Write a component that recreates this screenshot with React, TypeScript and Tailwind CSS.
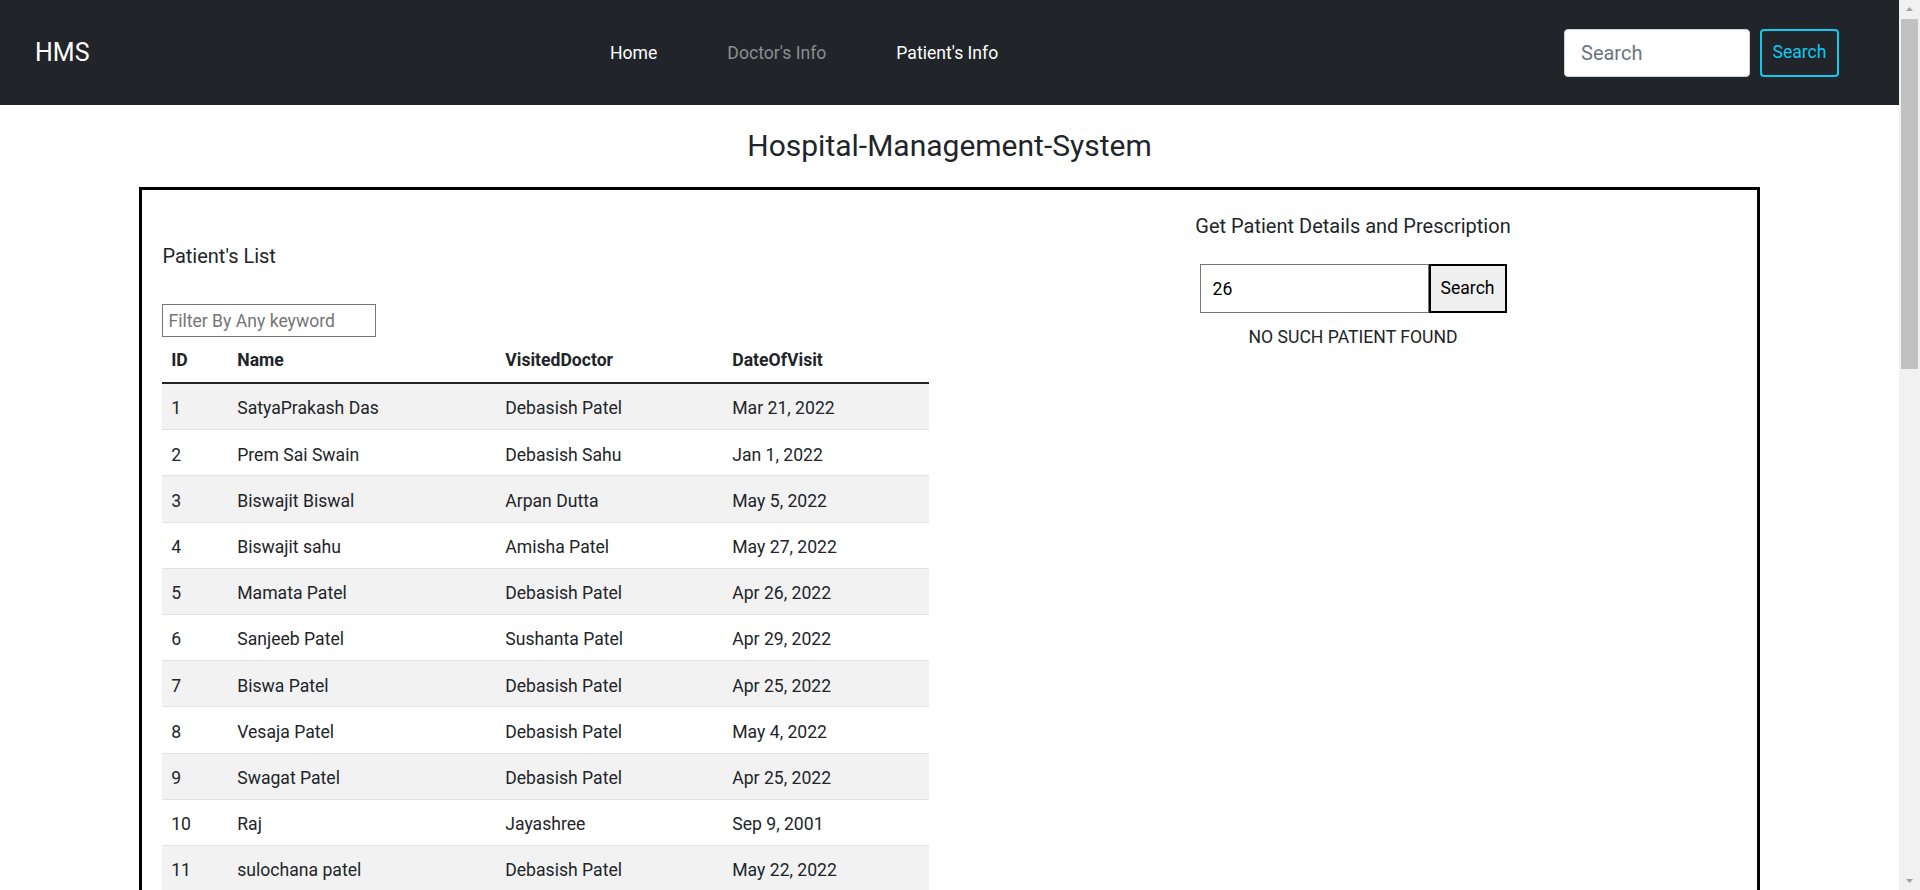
import { useState } from "react";

const patients = [
  { id: 1, name: "SatyaPrakash Das", doctor: "Debasish Patel", date: "Mar 21, 2022" },
  { id: 2, name: "Prem Sai Swain", doctor: "Debasish Sahu", date: "Jan 1, 2022" },
  { id: 3, name: "Biswajit Biswal", doctor: "Arpan Dutta", date: "May 5, 2022" },
  { id: 4, name: "Biswajit sahu", doctor: "Amisha Patel", date: "May 27, 2022" },
  { id: 5, name: "Mamata Patel", doctor: "Debasish Patel", date: "Apr 26, 2022" },
  { id: 6, name: "Sanjeeb Patel", doctor: "Sushanta Patel", date: "Apr 29, 2022" },
  { id: 7, name: "Biswa Patel", doctor: "Debasish Patel", date: "Apr 25, 2022" },
  { id: 8, name: "Vesaja Patel", doctor: "Debasish Patel", date: "May 4, 2022" },
  { id: 9, name: "Swagat Patel", doctor: "Debasish Patel", date: "Apr 25, 2022" },
  { id: 10, name: "Raj", doctor: "Jayashree", date: "Sep 9, 2001" },
  { id: 11, name: "sulochana patel", doctor: "Debasish Patel", date: "May 22, 2022" },
];

function Scrollbar() {
  return (
    <div className="sticky top-0 flex h-[890px] w-[21px] shrink-0 flex-col items-center bg-[#f1f1f1]">
      <svg width="9" height="19" viewBox="0 0 9 19" className="shrink-0">
        <path d="M4.5 7 L8 11 L1 11 Z" fill="#a3a3a3" />
      </svg>
      <div className="h-[350px] w-[17px] bg-[#c1c1c1]" />
      <div className="flex-1" />
      <svg width="9" height="17" viewBox="0 0 9 17" className="shrink-0">
        <path d="M1 6 L8 6 L4.5 10 Z" fill="#a3a3a3" />
      </svg>
    </div>
  );
}

export default function App() {
  const [filter, setFilter] = useState("");
  const [patientId, setPatientId] = useState("26");

  const rows = patients.filter((p) =>
    `${p.id} ${p.name} ${p.doctor} ${p.date}`.toLowerCase().includes(filter.toLowerCase())
  );

  return (
    <div className="flex bg-white font-['Roboto','Liberation_Sans',sans-serif] text-[#212529]">
      <div className="min-w-0 flex-1">
        {/* Navbar */}
        <nav className="flex h-[105px] items-center bg-[#212529] pl-[35px] pr-[60px]">
          <div className="w-[575px] text-[25px] leading-[36px] text-white">HMS</div>
          <ul className="flex gap-[70px] text-[17.6px] leading-[26px]">
            <li className="text-white">Home</li>
            <li className="text-[#8c8e91]">Doctor's Info</li>
            <li className="text-white">Patient's Info</li>
          </ul>
          <form className="ml-auto flex gap-[10px]" onSubmit={(e) => e.preventDefault()}>
            <input
              type="text"
              placeholder="Search"
              className="h-[48px] w-[186px] rounded-[4px] border border-[#ced4da] bg-white px-4 text-[20px] text-[#212529] outline-none placeholder:text-[#6c757d]"
            />
            <button
              type="submit"
              className="h-[48px] w-[79px] rounded-[4px] border-2 border-[#0dcaf0] text-[17.6px] text-[#0dcaf0]"
            >
              Search
            </button>
          </form>
        </nav>

        {/* Title */}
        <h3 className="mt-[23px] text-center text-[30px] leading-[36px]">Hospital-Management-System</h3>

        {/* Main box */}
        <div className="mx-auto mt-[23px] mb-10 box-content flex w-[85%] border-[3px] border-black pb-10">
          {/* Patient list */}
          <div className="w-1/2 px-5 pt-[54px]">
            <h5 className="text-[20px] leading-[24px]">Patient's List</h5>
            <input
              type="text"
              value={filter}
              onChange={(e) => setFilter(e.target.value)}
              placeholder="Filter By Any keyword"
              className="mt-[36px] block h-[33px] w-[214px] border border-[#767676] px-[5px] text-[17.6px] outline-none placeholder:text-[#757575]"
            />
            <table className="mt-[1px] w-full table-fixed border-collapse text-left text-[17.6px] leading-[26.4px]">
              <colgroup>
                <col className="w-[66px]" />
                <col className="w-[268px]" />
                <col className="w-[227px]" />
                <col className="w-[206px]" />
              </colgroup>
              <thead>
                <tr className="border-b-2 border-[#212529]">
                  <th className="px-[8.8px] py-[8.8px] font-bold">ID</th>
                  <th className="px-[8.8px] py-[8.8px] font-bold">Name</th>
                  <th className="px-[8.8px] py-[8.8px] font-bold">VisitedDoctor</th>
                  <th className="px-[8.8px] py-[8.8px] font-bold">DateOfVisit</th>
                </tr>
              </thead>
              <tbody>
                {rows.map((p, i) => (
                  <tr
                    key={p.id}
                    className={`border-b border-[#dee2e6] ${i % 2 === 0 ? "bg-[#f2f2f2]" : "bg-white"}`}
                  >
                    <td className="px-[8.8px] pt-[11.4px] pb-[7.4px]">{p.id}</td>
                    <td className="px-[8.8px] pt-[11.4px] pb-[7.4px]">{p.name}</td>
                    <td className="px-[8.8px] pt-[11.4px] pb-[7.4px]">{p.doctor}</td>
                    <td className="px-[8.8px] pt-[11.4px] pb-[7.4px]">{p.date}</td>
                  </tr>
                ))}
              </tbody>
            </table>
          </div>

          {/* Patient details */}
          <div className="w-1/2 px-5 pt-[24px] text-center">
            <h5 className="text-[20px] leading-[24px]">Get Patient Details and Prescription</h5>
            <form className="mt-[26px] flex justify-center" onSubmit={(e) => e.preventDefault()}>
              <input
                type="text"
                value={patientId}
                onChange={(e) => setPatientId(e.target.value)}
                className="h-[49px] w-[229px] border border-[#767676] px-3 text-[17.6px] text-black outline-none"
              />
              <button
                type="submit"
                className="h-[49px] w-[78px] border-2 border-black bg-[#efefef] text-[17.6px] text-black"
              >
                Search
              </button>
            </form>
            <p className="mt-[11px] text-[17.6px] leading-[26.4px]">NO SUCH PATIENT FOUND</p>
          </div>
        </div>
      </div>
      <Scrollbar />
    </div>
  );
}
